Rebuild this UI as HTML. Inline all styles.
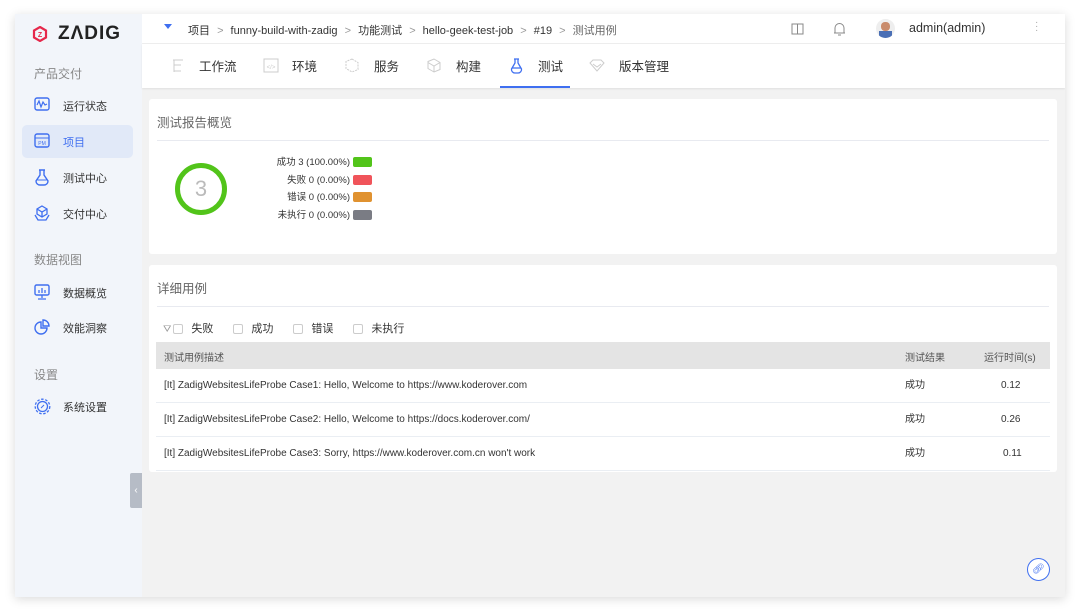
<!DOCTYPE html>
<html><head><meta charset="utf-8"><style>
*{margin:0;padding:0;box-sizing:border-box}
body{width:1080px;height:611px;background:#fff;font-family:"Liberation Sans","Noto Sans CJK SC",sans-serif;position:relative;overflow:hidden;color:#333}
.win{position:absolute;left:15px;top:14px;width:1050px;height:583px;background:#f2f2f2;box-shadow:0 2px 10px rgba(0,0,0,.15);overflow:hidden}
.side{position:absolute;left:0;top:0;width:127px;height:583px;background:#f2f5fa}
.abs{position:absolute}
.sec{position:absolute;left:19px;font-size:12px;color:#888}
.item{position:absolute;left:48px;font-size:11px;color:#333}
.ic{position:absolute;left:19px}
.top{position:absolute;left:127px;top:0;right:0;height:30px;background:#fff;border-bottom:1px solid #eee;font-size:11px;color:#333}
.tabs{position:absolute;left:127px;top:30px;right:0;height:44px;background:#fff;box-shadow:0 1px 2px rgba(0,0,0,.08)}
.tab{position:absolute;top:12px;font-size:12.5px;color:#333}
.card{position:absolute;left:134px;width:908px;background:#fff;border-radius:3px}
.ttl{position:absolute;left:8px;font-size:12.5px;color:#666}
.div{position:absolute;left:8px;right:8px;height:1px;background:#e8eaf0}
.lg{position:absolute;right:0;font-size:9.5px;color:#333;white-space:nowrap}
.sw{display:inline-block;width:19px;height:10px;border-radius:2px;vertical-align:middle;margin-left:3px}
.cb{display:inline-block;width:10px;height:10px;border:1px solid #ccc;border-radius:2px;vertical-align:middle;margin-right:8px}
.row{position:absolute;left:7px;width:894px;height:34px;border-bottom:1px solid #eaeef3;font-size:10px;color:#333}
.row span{position:absolute;top:0;line-height:33px;height:33px}
</style></head><body>
<div class="win">
<div class="side">
 <svg class="abs" style="left:17px;top:12px" width="16" height="16" viewBox="0 0 16 16"><polygon points="8,1 14,4.5 14,11.5 8,15 2,11.5 2,4.5" fill="none" stroke="#e6284b" stroke-width="2.2"/><text x="8" y="11" font-size="7" text-anchor="middle" fill="#e6284b" font-weight="bold" font-family="Liberation Sans">Z</text></svg>
 <div class="abs" style="left:43px;top:9px;font-size:19px;font-weight:bold;letter-spacing:1px;color:#222">ZΛDIG</div>
 <div class="sec" style="top:51px">产品交付</div>
 <svg class="ic" style="top:83px" width="16" height="14" viewBox="0 0 16 14"><rect x="1" y="1" width="14" height="12" rx="2" fill="none" stroke="#3f6ff0" stroke-width="1.4"/><polyline points="3,8 5,4 7,10 9,5 11,8 13,7" fill="none" stroke="#3f6ff0" stroke-width="1.2"/></svg>
 <div class="item" style="top:84px">运行状态</div>
 <div class="abs" style="left:7px;top:111px;width:111px;height:33px;background:#e1e9f8;border-radius:5px"></div>
 <svg class="ic" style="top:119px" width="16" height="15" viewBox="0 0 16 15"><rect x="1" y="1" width="14" height="13" rx="2" fill="none" stroke="#3f6ff0" stroke-width="1.4"/><line x1="1" y1="5" x2="15" y2="5" stroke="#3f6ff0"/><text x="8" y="12" font-size="5" text-anchor="middle" fill="#3f6ff0">PM</text></svg>
 <div class="item" style="top:120px;color:#3f6ff0">项目</div>
 <svg class="ic" style="top:155px" width="16" height="17" viewBox="0 0 16 17"><path d="M5 1h6M6 1v5L2 12a4 4 0 0 0 4 4h4a4 4 0 0 0 4-4L10 6V1" fill="none" stroke="#3f6ff0" stroke-width="1.4"/><path d="M3.5 11h9" stroke="#3f6ff0"/></svg>
 <div class="item" style="top:156px">测试中心</div>
 <svg class="ic" style="top:191px" width="16" height="17" viewBox="0 0 16 17"><path d="M8 1l5 3v5l-5 3-5-3V4z M3 4l5 3 5-3 M8 7v5 M1 10l3 5h8l3-5" fill="none" stroke="#3f6ff0" stroke-width="1.3"/></svg>
 <div class="item" style="top:192px">交付中心</div>
 <div class="sec" style="top:237px">数据视图</div>
 <svg class="ic" style="top:270px" width="16" height="16" viewBox="0 0 16 16"><rect x="1" y="1" width="14" height="10" rx="1.5" fill="none" stroke="#3f6ff0" stroke-width="1.4"/><path d="M5 9V6M8 9V4M11 9V6M8 11v3M4 15h8" stroke="#3f6ff0" stroke-width="1.3"/></svg>
 <div class="item" style="top:271px">数据概览</div>
 <svg class="ic" style="top:305px" width="16" height="16" viewBox="0 0 16 16"><path d="M7 3a6 6 0 1 0 6 6H7z" fill="none" stroke="#3f6ff0" stroke-width="1.4"/><path d="M9 1a6 6 0 0 1 6 6H9z" fill="none" stroke="#3f6ff0" stroke-width="1.4"/></svg>
 <div class="item" style="top:306px">效能洞察</div>
 <div class="sec" style="top:352px">设置</div>
 <svg class="ic" style="top:384px" width="17" height="17" viewBox="0 0 17 17"><circle cx="8.5" cy="8.5" r="5" fill="none" stroke="#3f6ff0" stroke-width="1.3"/><circle cx="8.5" cy="8.5" r="7.3" fill="none" stroke="#3f6ff0" stroke-width="1.3" stroke-dasharray="2.5 1.6"/><path d="M7 10l3-3" stroke="#3f6ff0"/></svg>
 <div class="item" style="top:385px">系统设置</div>
</div>
<div class="abs" style="left:115px;top:459px;width:12px;height:35px;background:#b6bcc6;border-radius:2px 0 0 2px;color:#fff;font-size:10px;text-align:center;line-height:35px">‹</div>
<div class="top">
 <div class="abs" style="left:22px;top:10px;width:0;height:0;border-left:4px solid transparent;border-right:4px solid transparent;border-top:5px solid #3f6ff0"></div>
 <div class="abs" style="left:46px;top:8px;white-space:nowrap">项目 <span style="color:#999;margin:0 4px">&gt;</span> funny-build-with-zadig <span style="color:#999;margin:0 4px">&gt;</span> 功能测试 <span style="color:#999;margin:0 4px">&gt;</span> hello-geek-test-job <span style="color:#999;margin:0 4px">&gt;</span> #19 <span style="color:#999;margin:0 4px">&gt;</span> <span style="color:#666">测试用例</span></div>
 <svg class="abs" style="left:649px;top:9px" width="13" height="12" viewBox="0 0 13 12"><path d="M1 1h11v10H1zM6.5 1v10" fill="none" stroke="#888"/></svg>
 <svg class="abs" style="left:691px;top:8px" width="13" height="14" viewBox="0 0 13 14"><path d="M2 11V6a4.5 4.5 0 0 1 9 0v5zM1 11h11M5 13h3" fill="none" stroke="#888"/></svg>
 <div class="abs" style="left:734px;top:5px;width:19px;height:19px;border-radius:50%;background:#eee;overflow:hidden"><div class="abs" style="left:5px;top:3px;width:9px;height:9px;border-radius:4px;background:#c98b6b"></div><div class="abs" style="left:3px;top:12px;width:13px;height:8px;background:#4a6fb5"></div></div>
 <div class="abs" style="left:767px;top:7px;font-size:12.5px;color:#333">admin(admin)</div>
 <div class="abs" style="left:893px;top:7px;color:#aaa;font-size:10px;line-height:4px">·<br>·<br>·</div>
</div>
<div class="tabs">
 <svg class="abs" style="left:30px;top:15px" width="12" height="14" viewBox="0 0 12 14"><path d="M1 1h10M2 1v12M2 6h7M2 12h7" fill="none" stroke="#ccc"/></svg>
 <div class="tab" style="left:57px">工作流</div>
 <svg class="abs" style="left:121px;top:14px" width="16" height="15" viewBox="0 0 16 15"><rect x="1" y="1" width="14" height="13" fill="none" stroke="#ccc"/><text x="8" y="11" font-size="6" text-anchor="middle" fill="#ccc">&lt;/&gt;</text></svg>
 <div class="tab" style="left:150px">环境</div>
 <svg class="abs" style="left:203px;top:14px" width="14" height="15" viewBox="0 0 14 15"><path d="M7 1l6 3.5v7L7 14l-6-3.5v-7z" fill="none" stroke="#ccc" stroke-dasharray="2 1"/></svg>
 <div class="tab" style="left:232px">服务</div>
 <svg class="abs" style="left:285px;top:14px" width="14" height="15" viewBox="0 0 14 15"><path d="M7 1l6 3.5v7L7 14l-6-3.5v-7zM1 4.5L7 8l6-3.5M7 8v6" fill="none" stroke="#ccc"/></svg>
 <div class="tab" style="left:314px">构建</div>
 <svg class="abs" style="left:368px;top:14px" width="13" height="16" viewBox="0 0 13 16"><path d="M4 1h5M5 1v4L1.5 11a3.5 3.5 0 0 0 3.5 4h3a3.5 3.5 0 0 0 3.5-4L8 5V1M2.5 10h8" fill="none" stroke="#3f6ff0" stroke-width="1.3"/></svg>
 <div class="tab" style="left:396px">测试</div>
 <div class="abs" style="left:358px;top:42px;width:70px;height:2px;background:#3f6ff0"></div>
 <svg class="abs" style="left:447px;top:15px" width="16" height="13" viewBox="0 0 16 13"><path d="M1 4l3-3h8l3 3-7 8z M4 5l4 3 4-3" fill="none" stroke="#ccc"/></svg>
 <div class="tab" style="left:477px">版本管理</div>
</div>
<div class="card" style="top:85px;height:155px">
 <div class="ttl" style="top:13px">测试报告概览</div>
 <div class="div" style="top:41px"></div>
 <div class="abs" style="left:26px;top:64px;width:52px;height:52px;border:5px solid #52c41a;border-radius:50%;text-align:center;line-height:42px;font-size:22px;color:#bbb">3</div>
 <div class="abs" style="left:120px;top:55px;width:103px;height:70px">
  <div class="lg" style="top:0">成功 3 (100.00%)<span class="sw" style="background:#52c41a"></span></div>
  <div class="lg" style="top:18px">失败 0 (0.00%)<span class="sw" style="background:#f0545a"></span></div>
  <div class="lg" style="top:35px">错误 0 (0.00%)<span class="sw" style="background:#e09230"></span></div>
  <div class="lg" style="top:53px">未执行 0 (0.00%)<span class="sw" style="background:#7a7c84"></span></div>
 </div>
</div>
<div class="card" style="top:251px;height:207px">
 <div class="ttl" style="top:13px">详细用例</div>
 <div class="div" style="top:41px"></div>
 <div class="abs" style="left:14px;top:55px;font-size:11px;color:#333;white-space:nowrap"><span style="color:#999;font-size:10px;margin-right:2px">⛛</span><span class="cb"></span>失败<span style="display:inline-block;width:20px"></span><span class="cb"></span>成功<span style="display:inline-block;width:20px"></span><span class="cb"></span>错误<span style="display:inline-block;width:20px"></span><span class="cb"></span>未执行</div>
 <div class="abs" style="left:7px;top:77px;width:894px;height:27px;background:#e4e4e4;font-size:10px;color:#555">
  <span class="abs" style="left:8px;top:7px">测试用例描述</span><span class="abs" style="left:749px;top:7px">测试结果</span><span class="abs" style="left:828px;top:7px">运行时间(s)</span>
 </div>
 <div class="row" style="top:104px"><span style="left:8px">[It] ZadigWebsitesLifeProbe Case1: Hello, Welcome to https://www.koderover.com</span><span style="left:749px">成功</span><span style="left:845px">0.12</span></div>
 <div class="row" style="top:138px"><span style="left:8px">[It] ZadigWebsitesLifeProbe Case2: Hello, Welcome to https://docs.koderover.com/</span><span style="left:749px">成功</span><span style="left:845px">0.26</span></div>
 <div class="row" style="top:172px"><span style="left:8px">[It] ZadigWebsitesLifeProbe Case3: Sorry, https://www.koderover.com.cn won't work</span><span style="left:749px">成功</span><span style="left:847px">0.11</span></div>
</div>
<div class="abs" style="left:1012px;top:544px;width:23px;height:23px;border:1.3px solid #3f6ff0;border-radius:50%;background:#fff;color:#3f6ff0;font-size:10px;text-align:center;line-height:21px">🔗︎</div>
</div>
</body></html>
